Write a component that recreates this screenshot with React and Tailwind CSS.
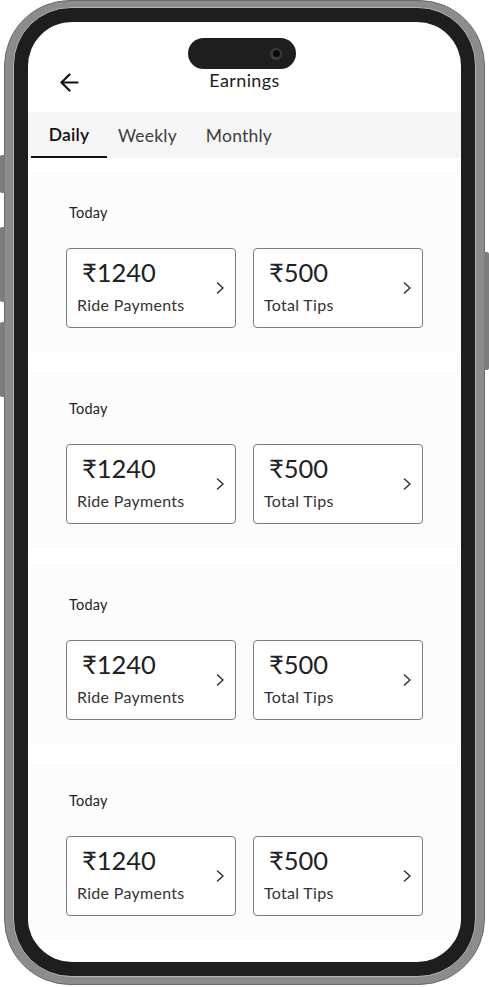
import React from 'react';

const FONT = { fontFamily: "Lato, 'Noto Sans', 'DejaVu Sans', sans-serif" };

const BackArrow = () => (
  <svg width="19" height="21" viewBox="0 0 19 21" fill="none" stroke="#111" strokeWidth="2.2" strokeLinecap="round" strokeLinejoin="round">
    <path d="M17.5 10.5H2" />
    <path d="M9.5 2.5L1.5 10.5L9.5 18.5" />
  </svg>
);

const Chevron = () => (
  <svg width="9" height="12" viewBox="0 0 9 12" fill="none" stroke="#333" strokeWidth="1.5" strokeLinecap="round" strokeLinejoin="round">
    <path d="M1.5 1L7 6L1.5 11" />
  </svg>
);

// one earnings tile
const StatCard = ({ amount, label }) => (
  <div className="flex h-[80px] w-[170px] items-center justify-between rounded-[4px] border border-[#7c7c7c] bg-white pl-[10px] pr-[10px]">
    <div className="flex flex-col self-start pt-[8px]">
      <span className="ml-[5px] text-[25.5px] leading-[30px] text-[#222]">{amount}</span>
      <span className="mt-[8px] text-[16px] leading-[20px] tracking-[0.3px] text-[#333]">{label}</span>
    </div>
    <Chevron />
  </div>
);

const Section = () => (
  <div className="h-[179px] bg-[#fcfcfc] pt-[30px]">
    <div className="h-[18px] pl-[41px] text-[14.5px] leading-[18px] tracking-[0.2px] text-[#222]">Today</div>
    <div className="mt-[26px] flex gap-[17px] pl-[38px]">
      <StatCard amount="₹1240" label="Ride Payments" />
      <StatCard amount="₹500" label="Total Tips" />
    </div>
  </div>
);

const tabs = [
  { name: 'Daily', cls: 'w-[76px] justify-center font-semibold text-[#111]', active: true },
  { name: 'Weekly', cls: 'pl-[11px] pr-[18px] text-[#3d3d3d]' },
  { name: 'Monthly', cls: 'pl-[11px] text-[#3d3d3d]' },
];

export default function App() {
  return (
    <div className="relative h-[987px] w-[489px] overflow-hidden bg-white" style={FONT}>
      {/* side buttons */}
      <div className="absolute left-0 top-[155px] h-[38px] w-[5px] rounded-l-[2px] bg-[#7e7b7d]" />
      <div className="absolute left-0 top-[227px] h-[75px] w-[5px] rounded-l-[2px] bg-[#7e7b7d]" />
      <div className="absolute left-0 top-[322px] h-[75px] w-[5px] rounded-l-[2px] bg-[#7e7b7d]" />
      <div className="absolute right-0 top-[252px] h-[118px] w-[5px] rounded-r-[2px] bg-[#7e7b7d]" />

      <div className="ml-[4px] h-[985px] w-[481px] rounded-[66px] border border-[#6a6a6a] bg-[#8c8c8c] px-[8px] pb-[7px] pt-[6px]">
        <div className="h-full w-full rounded-[58px] border border-[#b3b3b3] bg-[#1e1e1e] p-[14px]">
          <div className="relative h-full w-full overflow-hidden rounded-[44px] bg-white">
            {/* dynamic island */}
            <div className="absolute left-[160px] top-[16px] flex h-[31px] w-[108px] items-center justify-end rounded-full bg-[#1e1e1e] pr-[14px]">
              <div className="flex h-[12px] w-[12px] items-center justify-center rounded-full bg-[#3a3a3a]">
                <div className="h-[7px] w-[7px] rounded-full bg-[#0b0b0b]" />
              </div>
            </div>

            {/* header */}
            <div className="h-[90px] pt-[45px]">
              <div className="grid h-[22px] grid-cols-[1fr_auto_1fr] items-center">
                <div className="pl-[32px] pt-[3px]">
                  <BackArrow />
                </div>
                <div className="text-[18px] tracking-[0.4px] text-[#1c1c1c]">Earnings</div>
                <div />
              </div>
            </div>

            {/* tabs */}
            <div className="flex h-[46px] items-stretch bg-[#f6f6f6] pl-[3px]">
              {tabs.map((t) => (
                <div
                  key={t.name}
                  className={`flex items-center pt-[2px] text-[17.5px] tracking-[0.2px] ${t.cls} ${t.active ? 'border-b-2 border-[#111]' : ''}`}
                >
                  {t.name}
                </div>
              ))}
            </div>

            {/* sections */}
            <div className="flex flex-col gap-[17px] pt-[16px]">
              <Section />
              <Section />
              <Section />
              <Section />
            </div>
          </div>
        </div>
      </div>
    </div>
  );
}
